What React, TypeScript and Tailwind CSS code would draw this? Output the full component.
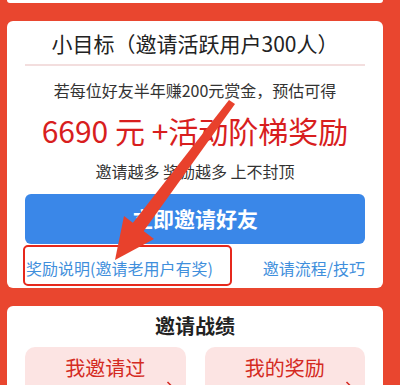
const font = { fontFamily: '"Noto Sans CJK SC", "Noto Sans", sans-serif' }

const Arrow = () => (
  <svg className="pointer-events-none absolute left-0 top-0" width="400" height="385" viewBox="0 0 400 385">
    {/* shaft, thin at the tail, wider near the head */}
    <polygon points="229,100 235,104 143,232 132,224" fill="#e8412c" />
    {/* head */}
    <polygon points="115,260 124,216 154,239" fill="#e8412c" />
  </svg>
)

const StatBox = ({ label }: { label: string }) => (
  <div className="flex h-[70px] flex-col rounded-[10px] bg-[#fce4e3] px-[12px] pt-[7px]">
    <span className="text-center text-[20px] leading-[28px] text-[#d42a22]">{label}</span>
    <div className="-mt-[1px] flex justify-end">
      <svg width="8" height="12" viewBox="0 0 8 12">
        <path d="M1.5 1 L6.5 6 L1.5 11" fill="none" stroke="#d42a22" strokeWidth="1.5" />
      </svg>
    </div>
  </div>
)

export default function App() {
  return (
    <div className="relative h-[385px] w-[400px] overflow-hidden bg-[#e9462f] pl-[7px]" style={font}>
      {/* previous card, only its bottom edge shows */}
      <div className="h-[3px] w-[376px] rounded-b-[3px] bg-white" />

      {/* main card */}
      <div className="relative mt-[18px] flex w-[376px] flex-col rounded-[6px] bg-white px-[18px] pb-[8px] pt-[7px]">
        <h2 className="text-center text-[21px] leading-[30px] text-[#222]">小目标（邀请活跃用户300人）</h2>
        <div className="mt-[6px] h-[2px] bg-[#f3dede]" />
        <p className="mt-[12px] text-center text-[16px] leading-[24px] text-[#333]">若每位好友半年赚200元赏金，预估可得</p>
        <p className="mt-[8px] text-center text-[30px] leading-[40px] text-[#d81e1e]">6690 元 +活动阶梯奖励</p>
        <p className="mt-[9px] text-center text-[16px] leading-[24px] text-[#333]">邀请越多 奖励越多 上不封顶</p>
        <button
          type="button"
          className="mt-[11px] h-[50px] rounded-[6px] bg-[#3a87e8] text-[21px] font-bold text-white"
        >
          立即邀请好友
        </button>
        <div className="mt-[12px] flex items-center justify-between text-[16px] leading-[24px] text-[#3f8fdc]">
          <span className="pl-[1px]">奖励说明(邀请老用户有奖)</span>
          <span>邀请流程/技巧</span>
        </div>

        {/* annotation box */}
        <div className="absolute left-[16px] top-[224px] h-[41px] w-[209px] rounded-[5px] border-[2.5px] border-[#e6281c]" />
      </div>

      {/* second card */}
      <div className="mt-[18px] flex w-[376px] flex-col rounded-[6px] bg-white px-[18px] pt-[6px]">
        <h3 className="text-center text-[20px] font-bold leading-[28px] text-[#222]">邀请战绩</h3>
        <div className="mt-[7px] grid grid-cols-2 gap-[19px]">
          <StatBox label="我邀请过" />
          <StatBox label="我的奖励" />
        </div>
      </div>

      <Arrow />
    </div>
  )
}
